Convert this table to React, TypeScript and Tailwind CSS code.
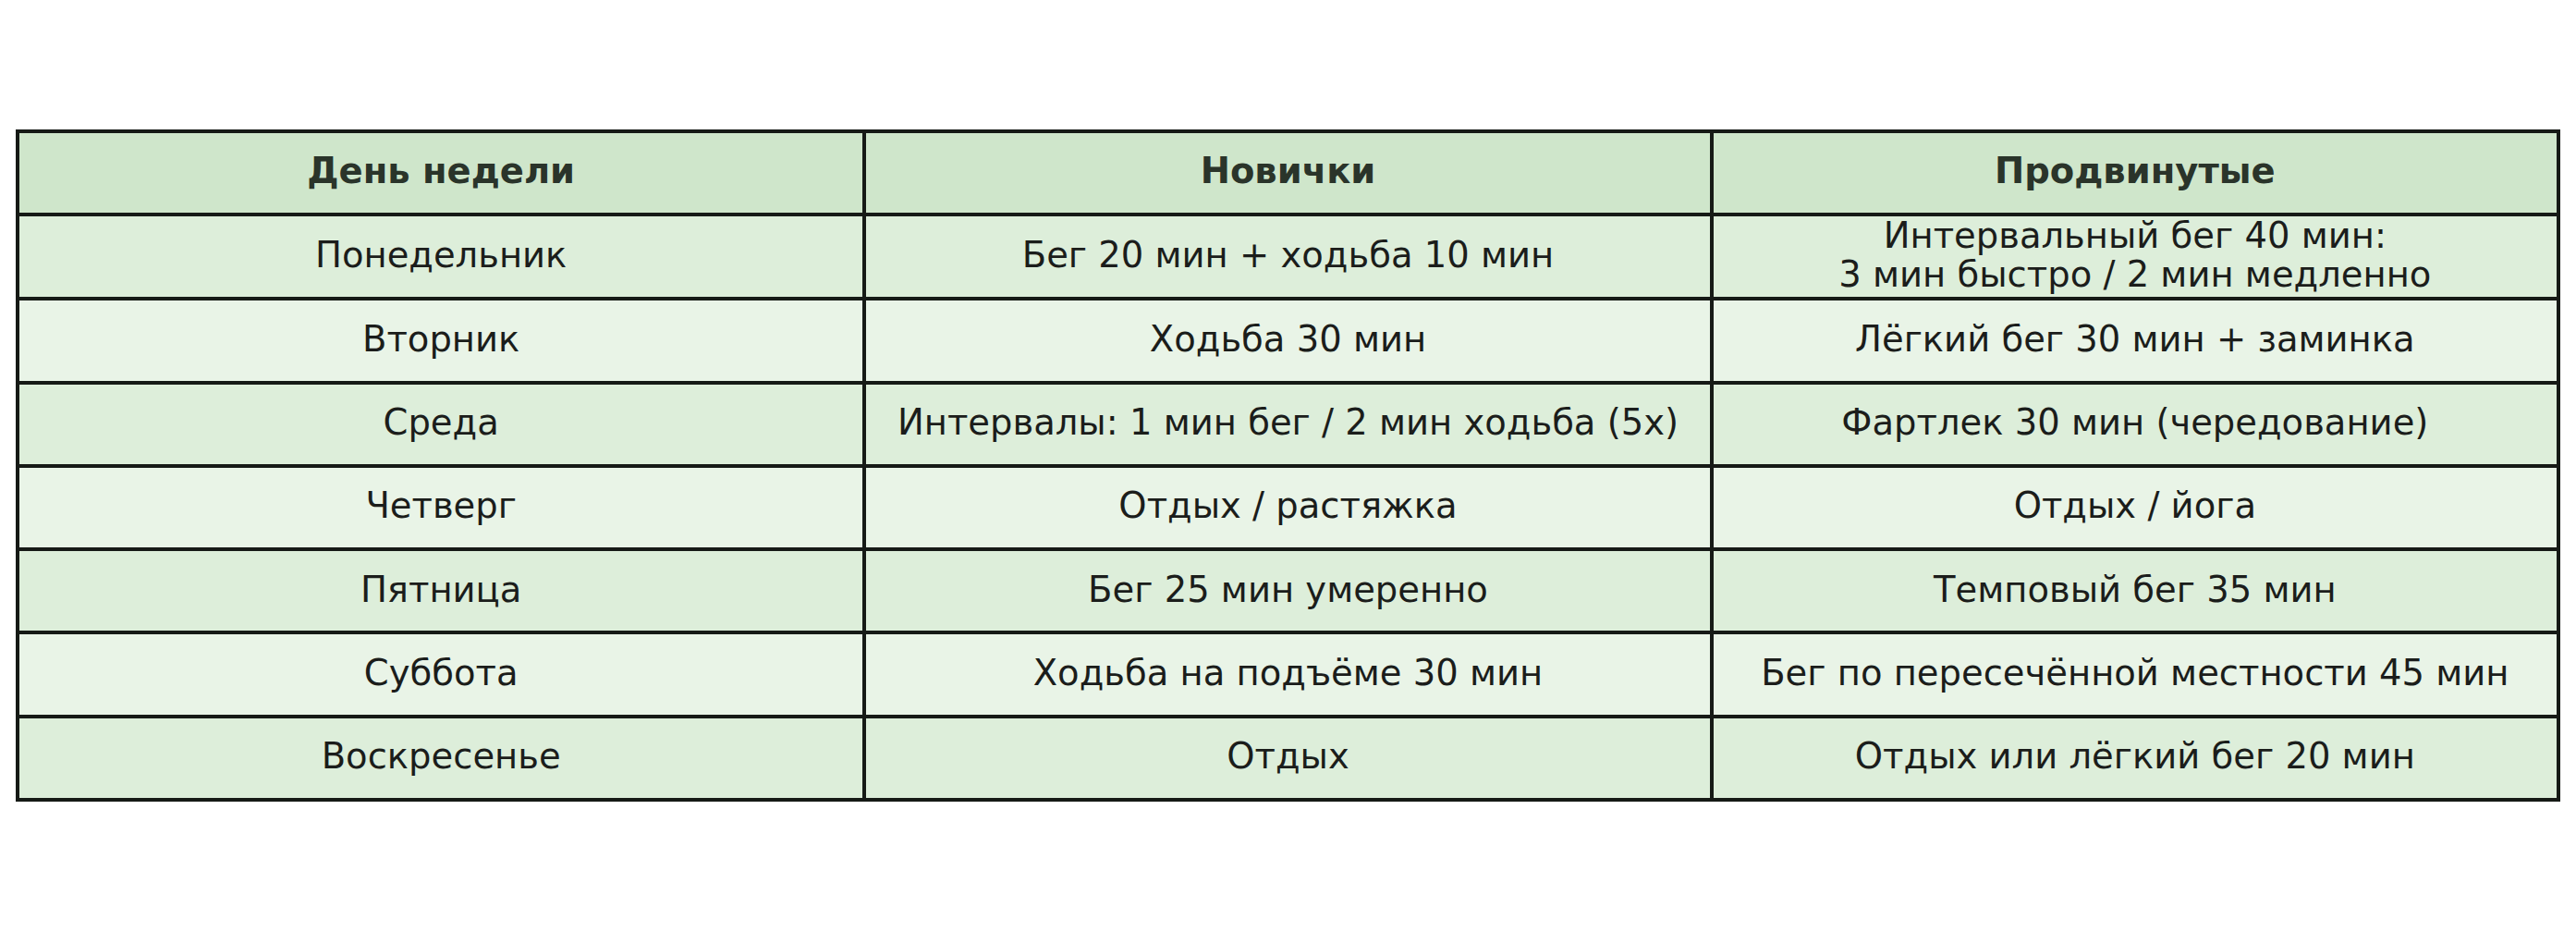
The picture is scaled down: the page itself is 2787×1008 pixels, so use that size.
const rows: [string, string, string][] = [
  ["Понедельник", "Бег 20 мин + ходьба 10 мин", "Интервальный бег 40 мин:\n3 мин быстро / 2 мин медленно"],
  ["Вторник", "Ходьба 30 мин", "Лёгкий бег 30 мин + заминка"],
  ["Среда", "Интервалы: 1 мин бег / 2 мин ходьба (5х)", "Фартлек 30 мин (чередование)"],
  ["Четверг", "Отдых / растяжка", "Отдых / йога"],
  ["Пятница", "Бег 25 мин умеренно", "Темповый бег 35 мин"],
  ["Суббота", "Ходьба на подъёме 30 мин", "Бег по пересечённой местности 45 мин"],
  ["Воскресенье", "Отдых", "Отдых или лёгкий бег 20 мин"],
];

const headers = ["День недели", "Новички", "Продвинутые"];

export default function App() {
  return (
    <div className="min-h-screen bg-white px-[17px] pt-[140px] font-['DejaVu_Sans',sans-serif]">
      <table className="w-full table-fixed border-collapse border-4 border-[#161a16]">
        <thead>
          <tr className="bg-[#cfe6cb]">
            {headers.map((h) => (
              <th
                key={h}
                className="h-[90.25px] border-4 border-[#161a16] pb-[3px] text-center align-middle text-[38.5px] font-bold leading-none text-[#2a342a]"
              >
                {h}
              </th>
            ))}
          </tr>
        </thead>
        <tbody>
          {rows.map((row, i) => (
            <tr key={row[0]} className={i % 2 === 0 ? "bg-[#ddeeda]" : "bg-[#e9f4e7]"}>
              {row.map((cell, j) => (
                <td
                  key={j}
                  className="h-[90.25px] whitespace-pre-line border-4 border-[#161a16] pb-[3px] text-center align-middle text-[38.5px] leading-[42px] text-[#1b1d1b]"
                >
                  {cell}
                </td>
              ))}
            </tr>
          ))}
        </tbody>
      </table>
    </div>
  );
}
